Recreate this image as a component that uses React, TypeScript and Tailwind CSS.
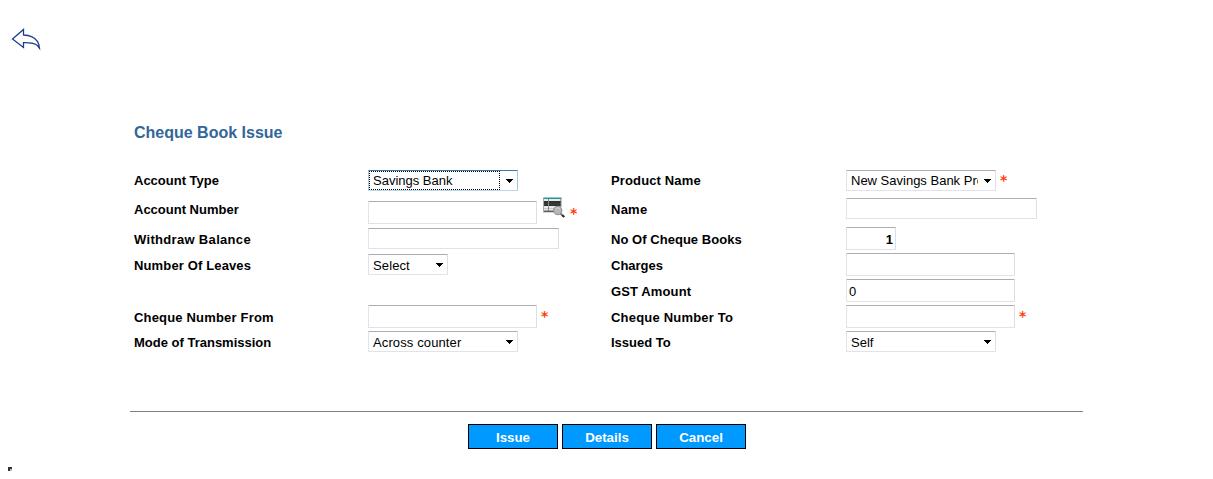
import type { ReactNode } from "react";

function Label({ children, className = "mt-0.5" }: { children: ReactNode; className?: string }) {
  return (
    <div className={`h-[21px] text-[13px] leading-[21px] font-bold whitespace-nowrap text-black ${className}`}>
      {children}
    </div>
  );
}

function Field({ className, value = "" }: { className: string; value?: string }) {
  return (
    <input
      type="text"
      defaultValue={value}
      className={`block shrink-0 rounded-[1px] border border-[#e2e3ea] border-t-[#abadb3] border-r-[#dbdfe6] bg-white px-0.5 text-[13px] text-black outline-none ${className}`}
    />
  );
}

function Select({ className, option, focused = false }: { className: string; option: string; focused?: boolean }) {
  const border = focused
    ? "border-[#a4c9e3] border-t-[#3d7bad] border-b-[#b7d9ed]"
    : "border-[#e2e3ea] border-t-[#abadb3] border-r-[#dbdfe6]";
  return (
    <div className={`relative flex h-[21px] shrink-0 items-center rounded-[1px] border bg-white ${border} ${className}`}>
      {focused && (
        <span className="pointer-events-none absolute top-0 right-[17px] bottom-0 left-0 border border-dotted border-black" />
      )}
      <span className="mr-[17px] ml-1 flex-1 overflow-hidden text-[13px] leading-[19px] whitespace-nowrap text-black">
        {option}
      </span>
      <svg className="absolute top-2 right-1" width="7" height="4" viewBox="0 0 7 4" shapeRendering="crispEdges">
        <path d="M0 0H7V1H6V2H5V3H4V4H3V3H2V2H1V1H0Z" fill="#000" />
      </svg>
    </div>
  );
}

function Star({ className }: { className: string }) {
  return (
    <span
      className={`h-4 w-2 font-['DejaVu_Sans',sans-serif] text-[14px] leading-4 font-bold text-[#ff3c0a] ${className}`}
    >
      *
    </span>
  );
}

function BackIcon() {
  return (
    <svg width="31" height="23" viewBox="0 0 31 23" fill="none" stroke="#1b3f8b" strokeWidth="1.3">
      <path d="M1.5 11L12.5 1.5V7C16 7.2 18 7.5 20.5 8.7C25 10.7 28 13.5 28.5 20.2L26.5 17.5C23 14.5 19 14.7 12.5 14.7V19.5L1.5 11Z" />
    </svg>
  );
}

function LookupIcon() {
  return (
    <svg width="23" height="21" viewBox="0 0 23 21">
      <rect x="0" y="1" width="18" height="14.5" fill="#aaa" />
      <rect x="1" y="1.5" width="16.5" height="12.5" fill="#e8eaea" />
      <rect x="0.5" y="0.5" width="18" height="1.5" fill="#279696" />
      <rect x="1" y="4" width="17" height="5" fill="#303030" />
      <path d="M1 7H18" stroke="#555" strokeWidth=".5" />
      <path d="M1 11.5H11" stroke="#c8c8c8" />
      <path d="M5.5 2V14" stroke="#8a8a8a" />
      <path d="M1 14.2H11" stroke="#555" strokeWidth="1.3" />
      <path d="M18 2V10" stroke="#888" />
      <circle cx="14.7" cy="13.5" r="4.2" fill="#b6b6b6" stroke="#8a8a8a" />
      <path d="M12.5 12C13.5 10.7 15.5 10.6 17 11.5" stroke="#d8d8d8" fill="none" />
      <path d="M17.5 16.5L19 18" stroke="#777" strokeWidth="2" />
      <path d="M19 18L21.3 20" stroke="#222" strokeWidth="2" />
    </svg>
  );
}

function ActionButton({ children }: { children: ReactNode }) {
  return (
    <button
      type="button"
      className="h-[25px] w-[90px] border border-black bg-[#0099ff] pt-0.5 text-[13.33px] leading-[21px] font-bold text-white"
    >
      {children}
    </button>
  );
}

export default function App() {
  return (
    <main className="h-[479px] w-[1213px] overflow-hidden bg-white font-['Liberation_Sans',Arial,sans-serif]">
      <header className="h-[122px] pt-7 pl-[11px]">
        <BackIcon />
      </header>
      <h1 className="ml-[134px] h-12 text-[16px] leading-[22px] font-bold text-[#336699]">Cheque Book Issue</h1>

      <form className="ml-[134px] grid grid-cols-[234px_243px_235px_220px] grid-rows-[27px_30px_26px_26px_26px_26px_26px]">
        <Label className="mt-0">Account Type</Label>
        <Select className="w-[150px] self-start" option="Savings Bank" focused />
        <Label className="mt-0 tracking-[0.14px]">Product Name</Label>
        <div className="flex">
          <Select className="w-[150px]" option="New Savings Bank Product" />
          <Star className="ml-1 mt-0.5" />
        </div>

        <Label>Account Number</Label>
        <div className="flex items-start">
          <Field className="mt-1 h-[23px] w-[169px]" />
          <div className="ml-1.5">
            <LookupIcon />
          </div>
          <Star className="ml-1 mt-2" />
        </div>
        <Label className="mt-0.5 tracking-[0.25px]">Name</Label>
        <Field className="mt-px h-[21px] w-[191px]" />

        <Label className="mt-0.5 tracking-[0.32px]">Withdraw Balance</Label>
        <Field className="mt-px h-[21px] w-[191px]" />
        <Label className="mt-0.5 tracking-[0.04px]">No Of Cheque Books</Label>
        <Field className="h-[23px] w-[50px] pt-0.5 text-right font-bold" value="1" />

        <Label className="mt-0.5 tracking-[0.14px]">Number Of Leaves</Label>
        <Select className="mt-px w-20 self-start pt-px tracking-[0.12px]" option="Select" />
        <Label>Charges</Label>
        <Field className="h-[23px] w-[169px]" />

        <div className="col-span-2" />
        <Label className="mt-0.5 tracking-[0.12px]">GST Amount</Label>
        <Field className="h-[23px] w-[169px] pt-0.5" value="0" />

        <Label className="mt-0.5 tracking-[0.18px]">Cheque Number From</Label>
        <div className="flex">
          <Field className="h-[23px] w-[169px]" />
          <Star className="ml-1 mt-[3px]" />
        </div>
        <Label className="mt-0.5 tracking-[0.2px]">Cheque Number To</Label>
        <div className="flex">
          <Field className="h-[23px] w-[169px]" />
          <Star className="ml-1 mt-[3px]" />
        </div>

        <Label className="mt-px">Mode of Transmission</Label>
        <Select className="w-[150px] self-start pt-px tracking-[0.12px]" option="Across counter" />
        <Label className="mt-px">Issued To</Label>
        <Select className="w-[150px] self-start pt-px" option="Self" />
      </form>

      <hr className="mt-[54px] ml-[130px] w-[953px] border-t border-[#808080]" />
      <div className="mt-3 ml-[468px] flex gap-1">
        <ActionButton>Issue</ActionButton>
        <ActionButton>Details</ActionButton>
        <ActionButton>Cancel</ActionButton>
      </div>
      <div className="mt-[18px] ml-2 size-1 border-t-2 border-l-2 border-[#333] bg-[#bbb]" />
    </main>
  );
}
